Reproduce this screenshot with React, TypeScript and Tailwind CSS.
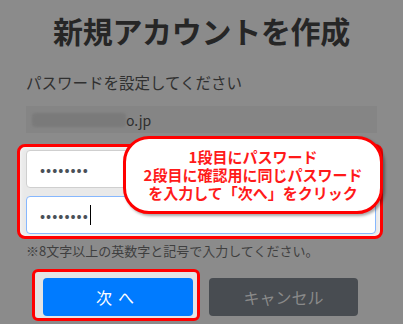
const jp = { fontFamily: '"Noto Sans CJK JP", "Noto Sans", sans-serif' };

export default function App() {
  return (
    <div
      style={jp}
      className="relative h-[324px] w-[403px] overflow-hidden bg-[#8b8b8b]"
    >
      <h1 className="pt-[11px] text-center text-[30px] font-bold leading-[38px] tracking-[-0.3px] text-[#262626]">
        新規アカウントを作成
      </h1>

      <p className="mt-[22px] pl-[26px] text-[15.5px] leading-[22px] text-[#303030]">
        パスワードを設定してください
      </p>

      <div className="mx-[26px] mt-[13px] flex h-[27px] items-center bg-[#858585] pl-[6px]">
        <span className="h-[14px] w-[94px] rounded-sm bg-[#7a7a7a] blur-[1px]" />
        <span className="text-[14px] leading-none text-[#2e2e2e]">o.jp</span>
      </div>

      <div className="ml-[17px] mr-[20px] mt-[11px] flex flex-col gap-[8px] rounded-[8px] border-[3px] border-[#ff0000] bg-[#e9e9e9] pb-[2px] pl-[6px] pr-[4px] pt-[3px] shadow-[inset_0_0_4px_rgba(255,255,255,0.9)]">
        <div className="flex h-[38px] items-center rounded-[4px] border border-[#cfcfcf] bg-white pl-[13px]">
          <span className="text-[15px] tracking-[1px] text-[#495057]">••••••••</span>
        </div>
        <div className="flex h-[38px] items-center rounded-[4px] border border-[#86b7fe] bg-white pl-[13px]">
          <span className="text-[15px] tracking-[1px] text-[#495057]">••••••••</span>
          <span className="ml-[1px] h-[20px] w-px bg-black" />
        </div>
      </div>

      <p className="mt-[4px] pl-[26px] text-[13px] leading-[16px] text-[#3f3f3f]">
        ※8文字以上の英数字と記号で入力してください。
      </p>

      <div className="mt-[10px] flex items-start gap-[9px] pl-[32px]">
        <div className="rounded-[6px] border-[3px] border-[#ff0000] bg-[#e4e4e4] pb-[2px] pl-[8px] pr-[4px] pt-[6px]">
          <button className="flex h-[38px] w-[150px] items-center justify-center rounded-[4px] bg-[#007bff] text-[16px] tracking-[6px] text-white">
            次へ
          </button>
        </div>
        <button className="mt-[9px] flex h-[38px] w-[149px] items-center justify-center rounded-[4px] bg-[#484c51] text-[16px] text-[#8a8a8a]">
          キャンセル
        </button>
      </div>

      <div className="absolute left-[123px] top-[136px] flex h-[78px] w-[260px] flex-col items-center justify-center rounded-[26px] border-[3px] border-[#ff0000] bg-white text-center text-[15px] font-bold leading-[18px] text-[#ff1a1a] shadow-[2px_2px_3px_rgba(0,0,0,0.35)]">
        <span>1段目にパスワード</span>
        <span>2段目に確認用に同じパスワード</span>
        <span>を入力して「次へ」をクリック</span>
      </div>
    </div>
  );
}
